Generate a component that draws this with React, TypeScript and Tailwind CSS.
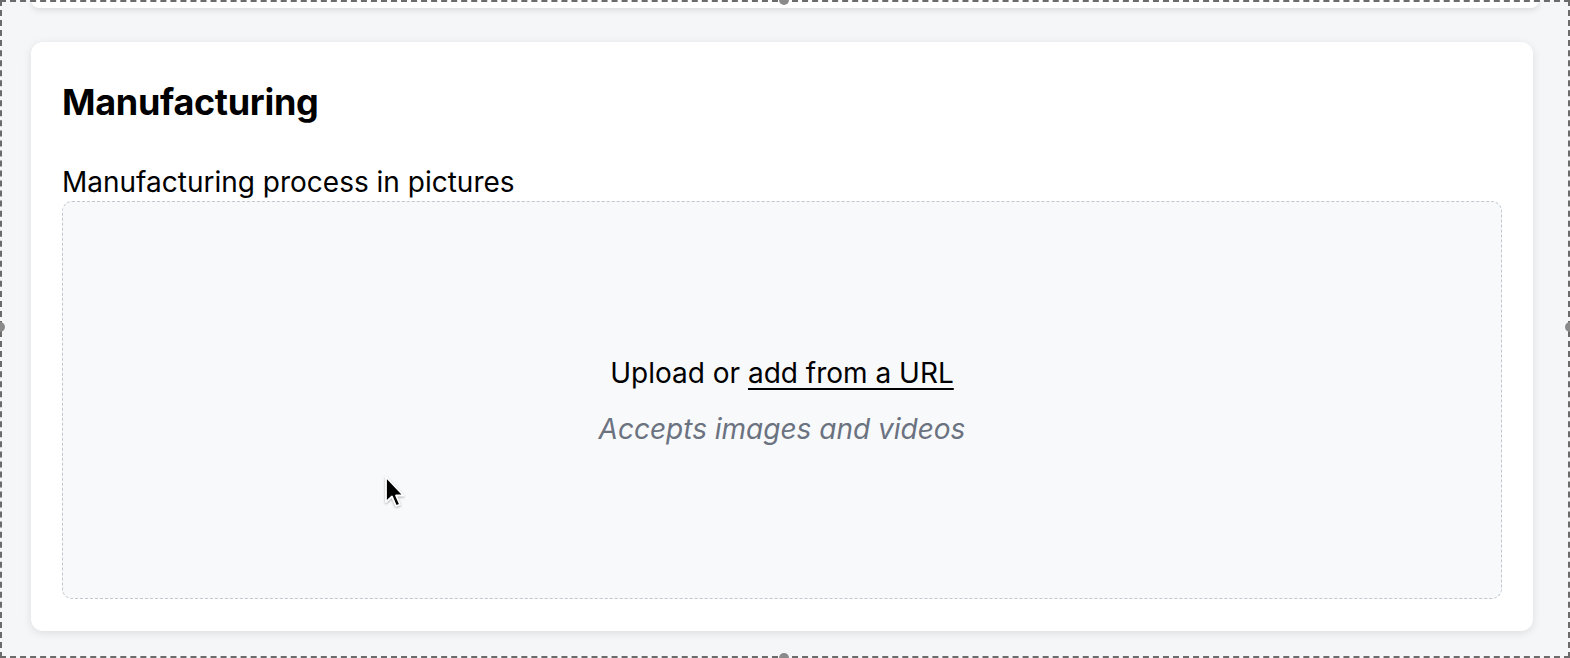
export default function App() {
  return (
    <div className="relative h-[658px] w-[1570px] overflow-hidden bg-[#f5f6f7] font-['Inter',sans-serif] text-black">
      <div className="px-[31px]">
        <div className="h-[8px] rounded-b-xl bg-white shadow-[0_2px_6px_rgba(0,0,0,0.12)]" />

        <section className="mt-[34px] h-[589px] w-[1502px] rounded-xl bg-white px-[31px] pt-[32px] shadow-[0_2px_8px_rgba(0,0,0,0.10)]">
          <h2 className="text-[36px] font-bold leading-[56px] tracking-[-0.3px]">Manufacturing</h2>
          <div className="mt-[35px] text-[28px] leading-[34px]">Manufacturing process in pictures</div>

          <div className="mt-[2px] flex h-[398px] flex-col items-center justify-center rounded-[10px] border border-dashed border-[#bfc8d0] bg-[#f8f9fb] pt-[2px]">
            <p className="text-[28px] leading-[34px]">
              Upload or <span className="underline decoration-2 underline-offset-[5px]">add from a URL</span>
            </p>
            <p className="mt-[22px] text-[28px] italic leading-[34px] text-[#6b7280]">Accepts images and videos</p>
          </div>
        </section>
      </div>

      {/* selection frame */}
      <div className="pointer-events-none absolute inset-0 border-2 border-dashed border-[#6b6b6b]" />
      <div className="absolute left-[779px] top-[-5px] h-[10px] w-[10px] rounded-full bg-[#8a8a8a]" />
      <div className="absolute bottom-[-5px] left-[779px] h-[10px] w-[10px] rounded-full bg-[#8a8a8a]" />
      <div className="absolute left-[-5px] top-[322px] h-[10px] w-[10px] rounded-full bg-[#8a8a8a]" />
      <div className="absolute right-[-5px] top-[322px] h-[10px] w-[10px] rounded-full bg-[#8a8a8a]" />

      {/* mouse pointer */}
      <svg className="absolute left-[383px] top-[475px] drop-shadow-[0_1px_1px_rgba(0,0,0,0.3)]" width="24" height="36" viewBox="0 0 24 36">
        <path d="M3 2 L3 27 L9 21.5 L13 31 L17 29.5 L13 20.5 L20.5 20.5 Z" fill="#000" stroke="#fff" strokeWidth="1.8" strokeLinejoin="round" />
      </svg>
    </div>
  );
}
